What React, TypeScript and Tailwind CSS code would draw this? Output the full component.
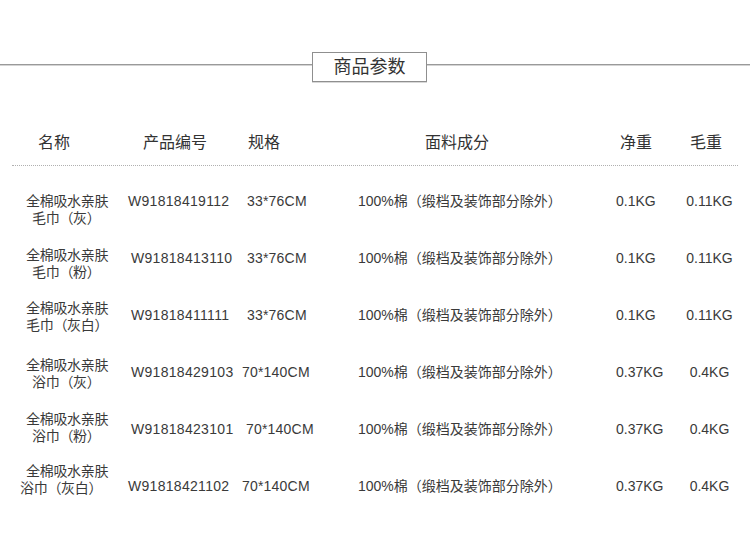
const FONT = { fontFamily: '"Liberation Sans", "Noto Sans CJK SC", sans-serif' };

interface Row {
  line1: string;
  line2: string;
  code: string;
  spec: string;
  net: string;
  gross: string;
  nameShift: string;
  line2Indent: string;
  codePad: string;
  specPad: string;
}

const rows: Row[] = [
  { line1: '全棉吸水亲肤', line2: '毛巾（灰）', code: 'W91818419112', spec: '33*76CM', net: '0.1KG', gross: '0.11KG', nameShift: 'mt-[16px]', line2Indent: 'pl-[6px]', codePad: 'pl-[6px]', specPad: 'pl-[7px]' },
  { line1: '全棉吸水亲肤', line2: '毛巾（粉）', code: 'W91818413110', spec: '33*76CM', net: '0.1KG', gross: '0.11KG', nameShift: 'mt-[10px]', line2Indent: 'pl-[6px]', codePad: 'pl-[9px]', specPad: 'pl-[7px]' },
  { line1: '全棉吸水亲肤', line2: '毛巾（灰白）', code: 'W91818411111', spec: '33*76CM', net: '0.1KG', gross: '0.11KG', nameShift: 'mt-[2px]', line2Indent: 'pl-0', codePad: 'pl-[9px]', specPad: 'pl-[7px]' },
  { line1: '全棉吸水亲肤', line2: '浴巾（灰）', code: 'W91818429103', spec: '70*140CM', net: '0.37KG', gross: '0.4KG', nameShift: 'mt-[2px]', line2Indent: 'pl-[6px]', codePad: 'pl-[9px]', specPad: 'pl-[2px]' },
  { line1: '全棉吸水亲肤', line2: '浴巾（粉）', code: 'W91818423101', spec: '70*140CM', net: '0.37KG', gross: '0.4KG', nameShift: 'mb-[4px]', line2Indent: 'pl-[6px]', codePad: 'pl-[9px]', specPad: 'pl-[6px]' },
  { line1: '全棉吸水亲肤', line2: '浴巾（灰白）', code: 'W91818421102', spec: '70*140CM', net: '0.37KG', gross: '0.4KG', nameShift: 'mb-[14px]', line2Indent: '-ml-[6px]', codePad: 'pl-[6px]', specPad: 'pl-[2px]' },
];

export default function App() {
  return (
    <div className="w-[750px] h-[558px] bg-white text-[#333] overflow-hidden" style={FONT}>
      {/* Title bar */}
      <div className="flex items-start pt-[52px]">
        <div className="w-[312px] mt-[12px] h-[2px] bg-[#9a9a9a] border-b border-[#d4d4d4]" />
        <div className="w-[115px] h-[30px] border border-[#8f8f8f] shadow-[0_1px_0_#d8d8d8] flex items-center justify-center text-[18px] leading-none text-[#333]">
          商品参数
        </div>
        <div className="flex-1 mt-[12px] h-[2px] bg-[#9a9a9a] border-b border-[#d4d4d4]" />
      </div>

      {/* Header */}
      <div className="flex mt-[48px] h-[26px] items-center text-[16px] text-[#333]">
        <div className="w-[122px] pl-[38px]">名称</div>
        <div className="w-[118px] pl-[21px]">产品编号</div>
        <div className="w-[105px] pl-[8px]">规格</div>
        <div className="w-[255px] pl-[80px]">面料成分</div>
        <div className="w-[75px] pl-[20px]">净重</div>
        <div className="w-[75px] pl-[15px]">毛重</div>
      </div>

      <div className="mt-[9px] mx-[12px] border-t border-dotted border-[#b0b0b0]" />

      {/* Rows */}
      <div className="pt-[7px]">
        {rows.map(r => (
          <div key={r.code} className="flex items-center h-[57px] text-[14px] text-[#3a3a3a]">
            <div className={`w-[122px] pl-[26px] leading-[17px] ${r.nameShift}`}>
              <div className="tracking-[-0.3px]">{r.line1}</div>
              <div className={`tracking-[-0.3px] ${r.line2Indent}`}>{r.line2}</div>
            </div>
            <div className={`w-[118px] tracking-[0.3px] ${r.codePad}`}>{r.code}</div>
            <div className={`w-[105px] tracking-[0.2px] ${r.specPad}`}>{r.spec}</div>
            <div className="w-[255px] pl-[13px]">100%棉（缎档及装饰部分除外）</div>
            <div className="w-[75px] pl-[16px]">{r.net}</div>
            <div className="w-[69px] text-center">{r.gross}</div>
          </div>
        ))}
      </div>
    </div>
  );
}
